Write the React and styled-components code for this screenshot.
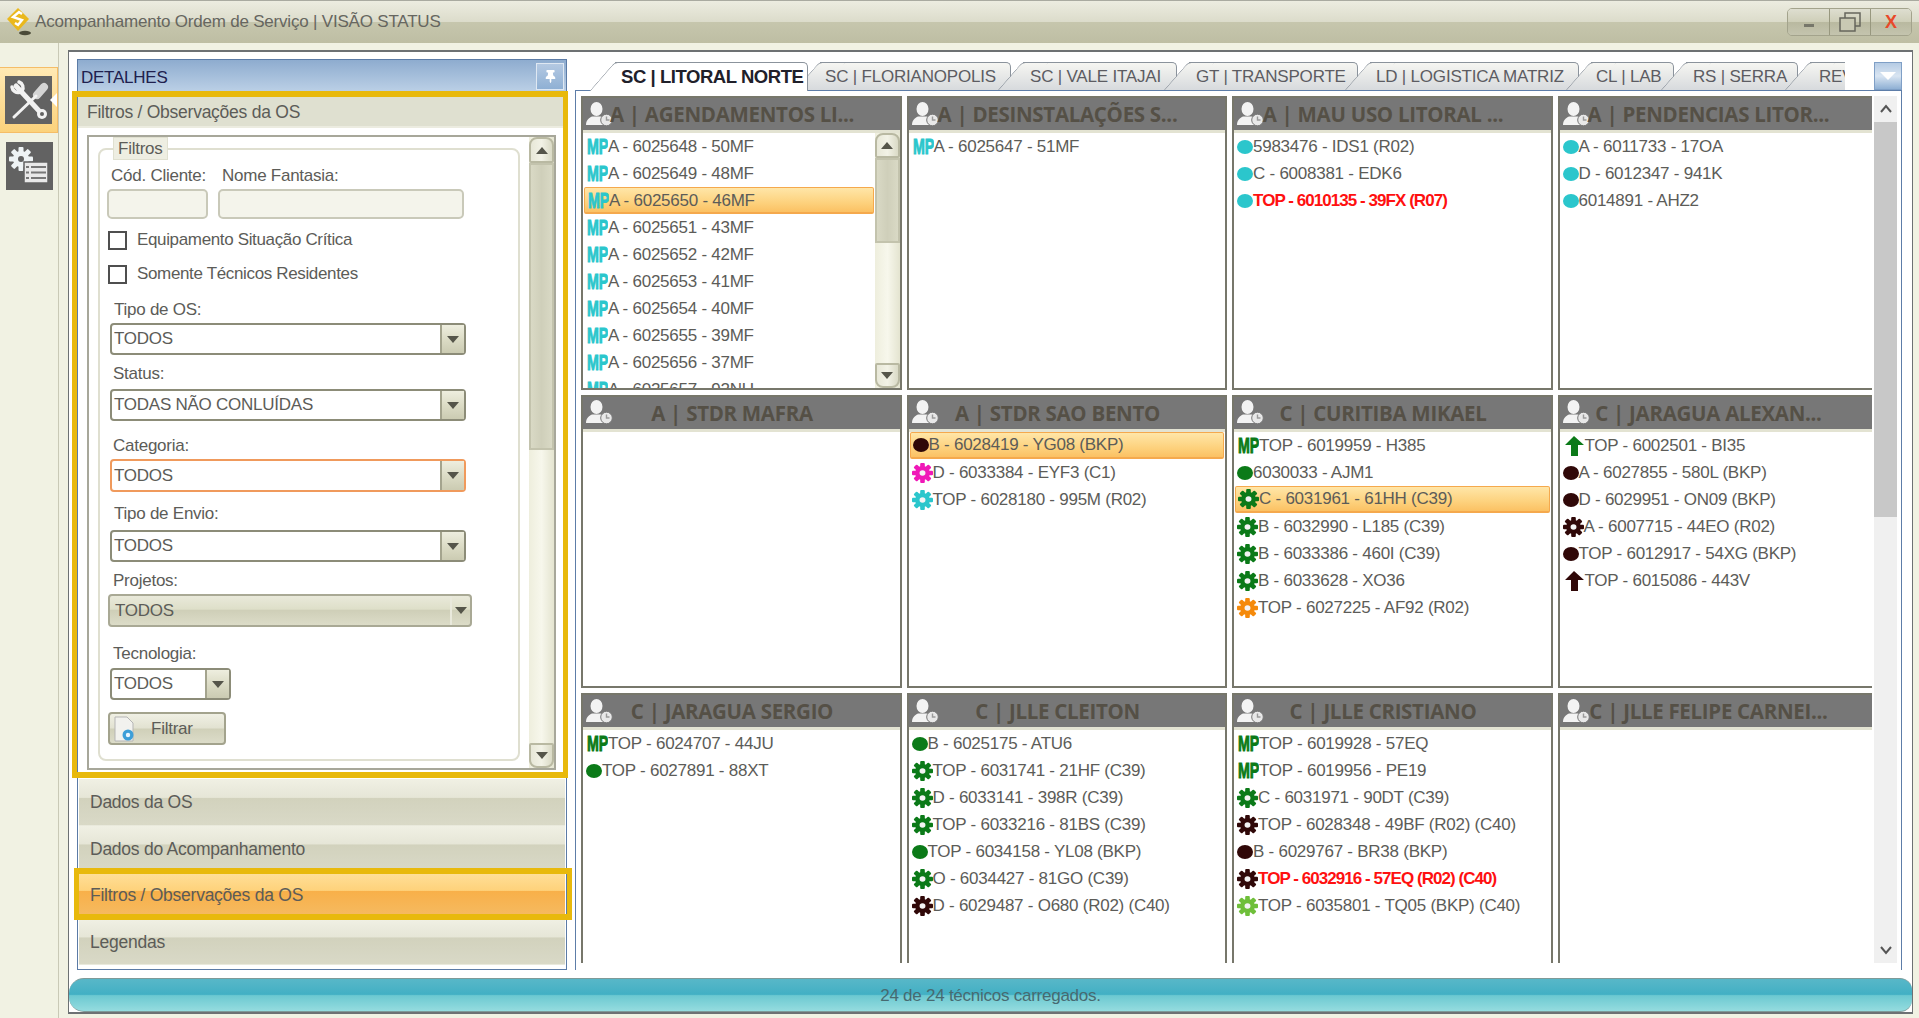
import React from 'react';
import styled, { createGlobalStyle } from 'styled-components';
import { FaThumbtack } from 'react-icons/fa';

const GlobalStyle = createGlobalStyle`
  html, body {
    margin: 0;
    padding: 0;
    background: #f1f2e3;
    overflow: hidden;
  }
  * { box-sizing: border-box; }
  body {
    font-family: "Liberation Sans", Arial, sans-serif;
    font-size: 17px;
    letter-spacing: -0.25px;
    color: #5c5c58;
  }
`;

const Page = styled.div`
  width: 1919px;
  height: 1018px;
  display: flex;
  flex-direction: column;
`;

// window title
const TitleBar = styled.div`
  height: 43px;
  flex: none;
  display: flex;
  align-items: center;
  padding: 0 7px 0 6px;
  border-top: 1px solid #a9aaa0;
  background: linear-gradient(#ecece0, #dcdccb 49%, #c6c6ad 51%, #bebea3);
`;

const TitleText = styled.span`
  margin-left: 1px;
  font-size: 17px;
  letter-spacing: -0.2px;
  color: #666660;
`;

const WindowButtons = styled.div`
  margin-left: auto;
  display: flex;
  height: 28px;
  border: 1px solid #a3a38c;
  border-radius: 5px;
  overflow: hidden;
`;

const WindowButton = styled.div`
  width: 41px;
  display: flex;
  align-items: center;
  justify-content: center;
  color: ${(p) => p.$color || '#6f6f64'};
  font-weight: 700;
  font-size: 18px;
  background: linear-gradient(#deded0, #cfcfb9 48%, #b9b9a0 52%, #c4c4ae);
  & + & { border-left: 1px solid #98987f; }
`;

const Body = styled.div`
  flex: 1;
  display: flex;
  min-height: 0;
`;

const Rail = styled.div`
  width: 59px;
  flex: none;
  padding-top: 24px;
  border-right: 1px solid #c9c9b6;
`;

const RailItem = styled.div`
  position: relative;
  height: 66px;
  display: flex;
  align-items: center;
  justify-content: center;
  ${(p) => p.$active && `
    background: linear-gradient(#ffe9b4, #fbd27c);
    border: 1px solid #f5bd68;
    border-left: 0;
    &::after {
      content: '';
      position: absolute;
      right: 0;
      top: 25px;
      border: 7px solid transparent;
      border-right-color: #fff;
      border-left: 0;
    }
  `}
`;

const RailIcon = styled.div`
  width: 47px;
  height: 48px;
  display: flex;
  align-items: center;
  justify-content: center;
  background: #626262;
`;

const Frame = styled.div`
  width: 1845px;
  height: 964px;
  margin: 7px 0 0 9px;
  background: #fff;
  border: 2px solid #6d7173;
  border-width: 2px 1px 2px 1px;
  display: flex;
  flex-direction: column;
`;

const MainRow = styled.div`
  height: 918px;
  flex: none;
  display: flex;
  padding: 7px 0 0 8px;
`;

// left dock
const DetailPanel = styled.div`
  position: relative;
  width: 490px;
  height: 911px;
  flex: none;
  display: flex;
  flex-direction: column;
  border: 1px solid #5b7ba6;
  background: #fff;
`;

const DetailHeader = styled.div`
  height: 37px;
  flex: none;
  display: flex;
  padding: 3px 2px 0 3px;
  justify-content: space-between;
  background: linear-gradient(#8eaccf, #c3d6ea);
`;

const DetailTitle = styled.span`
  color: #20204e;
  line-height: 30px;
`;

const PinButton = styled.div`
  width: 28px;
  height: 27px;
  display: flex;
  align-items: center;
  justify-content: center;
  color: #fff;
  border: 1px solid #dfe8f2;
  background: linear-gradient(#b4c9e2, #8fb0d4);
`;

const SectionHeader = styled.div`
  height: 31px;
  flex: none;
  padding-left: 9px;
  line-height: 31px;
  font-size: 17.5px;
  background: #dfe0d0;
  border-bottom: 2px solid #ecece0;
`;

const SectionBody = styled.div`
  height: 650px;
  flex: none;
  padding: 7px 10px 8px 9px;
`;

const FormBox = styled.div`
  height: 635px;
  display: flex;
  gap: 9px;
  padding-left: 9px;
  border: 2px solid #a7a79a;
`;

const GroupBox = styled.fieldset`
  width: 422px;
  height: 624px;
  margin: 0;
  padding: 0;
  min-width: 0;
  border: 2px solid #dfdfd0;
  border-radius: 8px;
`;

const GroupLegend = styled.legend`
  margin-left: 13px;
  padding: 0 4px;
  width: 55px;
  height: 23px;
  line-height: 22px;
  background: #eeeee2;
  border: 1px solid #e0e0d0;
`;

const LabelRow = styled.div`
  display: flex;
  height: 18px;
  line-height: 20px;
  margin-top: ${(p) => p.$mt}px;
`;

const FieldLabel = styled.label`
  margin-left: ${(p) => p.$ml}px;
  width: ${(p) => p.$w || 'auto'};
  white-space: nowrap;
`;

const InputRow = styled.div`
  display: flex;
  gap: 10px;
  margin: 5px 0 0 7px;
`;

const TextInput = styled.div`
  width: ${(p) => p.$w}px;
  height: 30px;
  background: #f4f4eb;
  border: 2px solid #c9c9b9;
  border-radius: 5px;
`;

const CheckRow = styled.div`
  display: flex;
  align-items: center;
  height: 20px;
  margin: ${(p) => p.$mt}px 0 0 8px;
  gap: 10px;
  letter-spacing: -0.35px;
`;

const CheckBox = styled.span`
  width: 19px;
  height: 19px;
  border: 2px solid #4f4f4f;
  background: #fff;
`;

const Combo = styled.div`
  display: flex;
  align-items: center;
  justify-content: space-between;
  width: ${(p) => p.$w}px;
  height: ${(p) => p.$h || 32}px;
  margin: ${(p) => p.$mt}px 0 0 ${(p) => p.$ml || 10}px;
  padding-left: 2px;
  border: 2px solid ${(p) => (p.$focus ? '#f09a5c' : '#8c8c78')};
  border-radius: 4px;
  background: ${(p) => (p.$disabled
    ? 'linear-gradient(#e9e9da, #dedfc9 45%, #cfcfb8 50%, #dcdcc8)'
    : '#fff')};
  ${(p) => p.$disabled && 'border-color: #a9a995; padding-left: 5px;'}
`;

const ComboButton = styled.span`
  width: ${(p) => (p.$flat ? 20 : 24)}px;
  align-self: stretch;
  display: flex;
  align-items: center;
  justify-content: center;
  background: ${(p) => (p.$flat ? 'transparent' : 'linear-gradient(#eeeedf, #dcdcc6 50%, #cbcbb2)')};
  border-left: 2px solid ${(p) => (p.$flat ? '#e9e9dc' : '#a4a48e')};
`;

const DownArrow = styled.i`
  border: 6px solid transparent;
  border-top: 7px solid #55554a;
  border-bottom: 0;
`;

const FilterButton = styled.div`
  display: flex;
  align-items: center;
  width: 118px;
  height: 33px;
  margin: 12px 0 0 8px;
  padding-left: 2px;
  border: 2px solid #a3a38d;
  border-radius: 4px;
  background: linear-gradient(#f0f0e4, #e2e2d1 48%, #d0d0b9 52%, #dcdcc9);
`;

const FilterLabel = styled.span`
  margin-left: 15px;
`;

const ScrollBar = styled.div`
  width: 25px;
  height: ${(p) => p.$h}px;
  flex: none;
  display: flex;
  flex-direction: column;
  background: linear-gradient(90deg, #eeeedd, #f7f7ec 50%, #e4e4d0);
`;

const ScrollEnd = styled.div`
  height: ${(p) => p.$h || 25}px;
  flex: none;
  display: flex;
  align-items: center;
  justify-content: center;
  border: 2px solid #b9b9a2;
  border-radius: ${(p) => (p.$down ? '2px 2px 8px 8px' : '8px 8px 2px 2px')};
  background: linear-gradient(90deg, #e8e8d8, #f2f2e6 50%, #dadac6);
  ${(p) => p.$down && 'margin-top: auto;'}
`;

const UpArrow = styled.i`
  border: 6px solid transparent;
  border-bottom: 7px solid #55554a;
  border-top: 0;
`;

const ScrollThumb = styled.div`
  height: ${(p) => p.$h}px;
  flex: none;
  border: 2px solid #c3c3ad;
  background: linear-gradient(90deg, #d9d9c5, #cfcfba 50%, #d9d9c5);
`;

const AccordionItem = styled.div`
  height: 46.5px;
  flex: none;
  display: flex;
  align-items: center;
  padding: 2px 0 0 11px;
  margin: 0 1px;
  font-size: 17.5px;
  border-bottom: 1px solid #e9e9dc;
  background: ${(p) => (p.$active
    ? 'linear-gradient(#ffe09a, #fed27b 40%, #f8b049 42%, #f5bb63)'
    : 'linear-gradient(#f0f0e4, #e6e6d7 40%, #d2d2bd 42%, #d9d9c7)')};
`;

const AccordionList = styled.div`
  margin-top: 1px;
  display: flex;
  flex-direction: column;
`;

// the two yellow marks drawn over the shot
const Highlight = styled.div`
  position: absolute;
  left: ${(p) => p.$left}px;
  top: ${(p) => p.$top}px;
  width: ${(p) => p.$w}px;
  height: ${(p) => p.$h}px;
  border: 6px solid #e8b90c;
  border-left-width: 5px;
  border-right-width: 5px;
  pointer-events: none;
`;

// right side, tabs and cards
const TabPanel = styled.div`
  width: 1327px;
  margin: 3px 0 0 8px;
  flex: none;
  display: flex;
  flex-direction: column;
`;

const TabStrip = styled.div`
  height: 28px;
  flex: none;
  display: flex;
  justify-content: space-between;
`;

const Tabs = styled.div`
  width: 1270px;
  display: flex;
  overflow: hidden;
  padding-left: 40px;
  height: 29px;
  position: relative;
  z-index: 1;
`;

const Tab = styled.div`
  position: relative;
  z-index: ${(p) => (p.$active ? 3 : 0)};
  flex: none;
  width: ${(p) => p.$w}px;
  height: ${(p) => (p.$active ? 29 : 28)}px;
  margin-left: ${(p) => (p.$first ? 0 : 12)}px;
  line-height: 27px;
  padding-left: ${(p) => p.$pad}px;
  white-space: nowrap;
  font-size: ${(p) => (p.$active ? 18.5 : 17)}px;
  font-weight: ${(p) => (p.$active ? 700 : 400)};
  letter-spacing: ${(p) => (p.$active ? '-0.45px' : '-0.2px')};
  color: ${(p) => (p.$active ? '#20202a' : '#5c5c62')};
  border: 1px solid #8b939c;
  border-width: 1px 1px 0 0;
  border-radius: 0 5px 0 0;
  background: ${(p) => (p.$active ? '#fff' : 'linear-gradient(#f6f6f2, #d7dadd)')};
  &::before {
    content: '';
    position: absolute;
    z-index: -1;
    top: -1px;
    bottom: 0;
    left: -13px;
    width: 26px;
    border: 1px solid #8b939c;
    border-width: 1px 0 0 1px;
    border-radius: 4px 0 0 0;
    transform: skewX(-41deg);
    background: ${(p) => (p.$active ? '#fff' : 'linear-gradient(#f6f6f2, #d7dadd)')};
  }
`;

const MenuButton = styled.div`
  width: 28px;
  height: 28px;
  display: flex;
  align-items: center;
  justify-content: center;
  border: 1px solid #7f9fc6;
  background: linear-gradient(#b5cbe4, #d9e5f2 50%, #8fb0d4);
`;

const WhiteArrow = styled.i`
  border: 8px solid transparent;
  border-top: 8px solid #fff;
  border-bottom: 0;
`;

const TabContent = styled.div`
  height: 880px;
  flex: none;
  display: flex;
  gap: 2px;
  padding: 5px 0 0 5px;
  border: 1px solid #5d7da8;
  border-bottom: 0;
`;

const CardArea = styled.div`
  width: 1291px;
  height: 867px;
  overflow: hidden;
`;

const CardGrid = styled.div`
  width: 1310px;
  display: grid;
  grid-template-columns: repeat(4, 320.5px);
  grid-auto-rows: 293.5px;
  column-gap: 5px;
  row-gap: 5px;
`;

const Card = styled.div`
  display: flex;
  flex-direction: column;
  border: 2px solid #77776b;
  background: #fff;
  min-height: 0;
  overflow: hidden;
`;

const CardHeader = styled.div`
  height: 35px;
  flex: none;
  display: flex;
  align-items: center;
  padding-left: 2px;
  background: #777777;
  border-bottom: 3px solid #e3e3d2;
`;

const CardTitle = styled.span`
  flex: none;
  width: 246px;
  margin-left: -4px;
  text-align: center;
  font-family: "Open Sans", "Liberation Sans", sans-serif;
  font-size: 20.5px;
  font-weight: 700;
  letter-spacing: -0.3px;
  color: #555046;
  white-space: nowrap;
`;

const CardBody = styled.div`
  flex: 1;
  display: flex;
  min-height: 0;
`;

const List = styled.div`
  flex: 1;
  min-width: 0;
  overflow: hidden;
`;

const Row = styled.div`
  height: 27px;
  margin: 0 1px;
  padding: 1px 0 0 2px;
  display: flex;
  align-items: center;
  white-space: nowrap;
  color: ${(p) => (p.$alert ? '#ff1010' : 'inherit')};
  font-weight: ${(p) => (p.$alert ? 700 : 400)};
  letter-spacing: ${(p) => (p.$alert ? '-0.95px' : '-0.25px')};
  ${(p) => p.$selected && `
    background: linear-gradient(#ffe6a8, #fdd27e 60%, #fbc163);
    border: 2px solid #f5a94d;
    border-width: 1px 1px 2px 1px;
    border-radius: 2px;
  `}
`;

const RowDot = styled.span`
  flex: none;
  width: 16px;
  height: 14px;
  border-radius: 50%;
  background: ${(p) => p.$color};
`;

const MainScroll = styled.div`
  width: 23px;
  height: 867px;
  flex: none;
  display: flex;
  flex-direction: column;
  align-items: stretch;
  background: #f0f0f0;
`;

const MainScrollEnd = styled.div`
  height: 26px;
  flex: none;
  display: flex;
  align-items: center;
  justify-content: center;
  ${(p) => p.$down && 'margin-top: auto;'}
`;

const MainThumb = styled.div`
  height: 395px;
  flex: none;
  background: #c8c8c8;
`;

const StatusBar = styled.div`
  height: 34px;
  margin: 8px 0 0;
  padding-top: 2px;
  flex: none;
  display: flex;
  align-items: center;
  justify-content: center;
  color: #476a70;
  border-radius: 15px 12px 12px 15px;
  border: 1px solid #7f9a98;
  border-width: 1px 0;
  background: linear-gradient(#58b7c8, #42b0c4 48%, #6cc9d1 52%, #95dcdf);
`;

const Logo = () => (
  <svg width="28" height="30" viewBox="0 0 28 30" style={{ flex: 'none' }}>
    <path d="M12 1l11 11-11 12L1 12z" fill="#eab81d" />
    <path d="M16 7l-3-2-6 5 9 3-4 5-3-2" fill="none" stroke="#fff" strokeWidth="2.400" />
    <ellipse cx="19" cy="26" rx="6" ry="2.200" fill="#4a4a38" />
  </svg>
);

const UserClock = () => (
  <svg width="28" height="25" viewBox="0 0 28 25" style={{ flex: 'none' }}>
    <ellipse cx="11.500" cy="7" rx="6" ry="7" fill="#f3f3f3" />
    <path d="M1 23c0-5 3-7 6-8.500h9c3 1.500 5 3.500 5 8.500z" fill="#f3f3f3" />
    <circle cx="21.500" cy="18" r="5.800" fill="#e8e8e8" stroke="#777" />
    <path d="M21.500 14.500v3.500h3" fill="none" stroke="#9a9a9a" strokeWidth="1.400" />
  </svg>
);

const MpMark = ({ color }) => (
  <svg width="22" height="20" viewBox="0 0 22 20" style={{ flex: 'none' }}>
    <text
      x="1"
      y="17"
      textLength="21"
      lengthAdjust="spacingAndGlyphs"
      fontFamily="Liberation Sans"
      fontWeight="700"
      fontSize="22"
      fill={color}
      stroke={color}
      strokeWidth="1"
    >
      MP
    </text>
  </svg>
);

const ArrowMark = ({ color }) => (
  <svg width="22" height="20" viewBox="0 0 22 20" style={{ flex: 'none' }}>
    <path d="M11 0l10 9h-6v11H8V9H2z" fill={color} />
  </svg>
);

const GearMark = ({ color }) => (
  <svg width="21" height="20" viewBox="0 0 20 20" preserveAspectRatio="none" style={{ flex: 'none' }}>
    <g fill={color}>
      <circle cx="10" cy="10" r="7" />
      {[0, 45, 90, 135].map((deg) => (
        <rect key={deg} x="7.800" y="0" width="4.400" height="20" rx="1" transform={`rotate(${deg} 10 10)`} />
      ))}
    </g>
    <circle cx="10" cy="10" r="2.800" fill="#f4f4f4" />
  </svg>
);

const ToolsMark = () => (
  <svg width="40" height="42" viewBox="0 0 40 42">
    <g fill="none" stroke="#f2f2f2" strokeLinecap="round">
      <path d="M7 7l25 27" strokeWidth="5" />
      <path d="M35 8l-7 8" strokeWidth="8" stroke="#d4d4d4" />
      <path d="M27 17L5 38" strokeWidth="3" />
      <path d="M3 8a6 6 0 0 0 8 5M10 3a6 6 0 0 1 3 9" strokeWidth="3.500" />
    </g>
    <circle cx="33" cy="35" r="5" fill="#f2f2f2" />
    <circle cx="33" cy="35" r="2" fill="#626262" />
  </svg>
);

const SettingsMark = () => (
  <svg width="40" height="38" viewBox="0 0 40 38">
    <g fill="#eef3f5">
      <circle cx="12" cy="12" r="8" />
      {[0, 45, 90, 135].map((deg) => (
        <rect key={deg} x="9.500" y="0" width="5" height="24" rx="1" transform={`rotate(${deg} 12 12)`} />
      ))}
    </g>
    <circle cx="12" cy="12" r="3" fill="#626262" />
    <rect x="15" y="15" width="24" height="21" fill="#e9e9e9" stroke="#626262" strokeWidth="1.500" />
    <path d="M22 20h15M22 25.500h15M22 31h15" stroke="#777" strokeWidth="2" />
    <path d="M17 20h3M17 25.500h3M17 31h3" stroke="#777" strokeWidth="2" />
  </svg>
);

const RowMark = ({ kind, color }) => {
  if (kind === 'mp') return <MpMark color={color} />;
  if (kind === 'gear') return <GearMark color={color} />;
  if (kind === 'arrow') return <ArrowMark color={color} />;
  return <RowDot $color={color} />;
};

const TEAL = '#2bc6cc';
const GREEN = '#0b7a18';
const DARK = '#300808';

const tabs = [
  { label: 'SC | LITORAL NORTE', w: 193, pad: 6, active: true },
  { label: 'SC | FLORIANOPOLIS', w: 191, pad: 5 },
  { label: 'SC | VALE ITAJAI', w: 154, pad: 7 },
  { label: 'GT | TRANSPORTE', w: 169, pad: 7 },
  { label: 'LD | LOGISTICA MATRIZ', w: 209, pad: 6 },
  { label: 'CL | LAB', w: 83, pad: 5 },
  { label: 'RS | SERRA', w: 112, pad: 7 },
  { label: 'REV', w: 60, pad: 9 },
];

const mp = (text, selected) => ({ kind: 'mp', color: TEAL, text, selected });
const dot = (color, text, extra) => ({ kind: 'dot', color, text, ...extra });
const gear = (color, text, extra) => ({ kind: 'gear', color, text, ...extra });
const mpGreen = (text) => ({ kind: 'mp', color: GREEN, text });
const arrow = (color, text) => ({ kind: 'arrow', color, text });

const cards = [
  {
    title: 'A | AGENDAMENTOS LI...',
    scroll: true,
    rows: [
      mp('A - 6025648 - 50MF'),
      mp('A - 6025649 - 48MF'),
      mp('A - 6025650 - 46MF', true),
      mp('A - 6025651 - 43MF'),
      mp('A - 6025652 - 42MF'),
      mp('A - 6025653 - 41MF'),
      mp('A - 6025654 - 40MF'),
      mp('A - 6025655 - 39MF'),
      mp('A - 6025656 - 37MF'),
      mp('A - 6025657 - 92NU'),
    ],
  },
  { title: 'A | DESINSTALAÇÕES S...', rows: [mp('A - 6025647 - 51MF')] },
  {
    title: 'A | MAU USO LITORAL ...',
    rows: [
      dot(TEAL, '5983476 - IDS1 (R02)'),
      dot(TEAL, 'C - 6008381 - EDK6'),
      dot(TEAL, 'TOP - 6010135 - 39FX (R07)', { alert: true }),
    ],
  },
  {
    title: 'A | PENDENCIAS LITOR...',
    rows: [
      dot(TEAL, 'A - 6011733 - 17OA'),
      dot(TEAL, 'D - 6012347 - 941K'),
      dot(TEAL, '6014891 - AHZ2'),
    ],
  },
  { title: 'A | STDR MAFRA', rows: [] },
  {
    title: 'A | STDR SAO BENTO',
    rows: [
      dot(DARK, 'B - 6028419 - YG08 (BKP)', { selected: true }),
      gear('#f018b8', 'D - 6033384 - EYF3 (C1)'),
      gear(TEAL, 'TOP - 6028180 - 995M (R02)'),
    ],
  },
  {
    title: 'C | CURITIBA MIKAEL',
    rows: [
      mpGreen('TOP - 6019959 - H385'),
      dot(GREEN, '6030033 - AJM1'),
      gear(GREEN, 'C - 6031961 - 61HH (C39)', { selected: true }),
      gear(GREEN, 'B - 6032990 - L185 (C39)'),
      gear(GREEN, 'B - 6033386 - 460I (C39)'),
      gear(GREEN, 'B - 6033628 - XO36'),
      gear('#f58a0b', 'TOP - 6027225 - AF92 (R02)'),
    ],
  },
  {
    title: 'C | JARAGUA ALEXAN...',
    rows: [
      arrow(GREEN, 'TOP - 6002501 - BI35'),
      dot(DARK, 'A - 6027855 - 580L (BKP)'),
      dot(DARK, 'D - 6029951 - ON09 (BKP)'),
      gear(DARK, 'A - 6007715 - 44EO (R02)'),
      dot(DARK, 'TOP - 6012917 - 54XG (BKP)'),
      arrow(DARK, 'TOP - 6015086 - 443V'),
    ],
  },
  {
    title: 'C | JARAGUA SERGIO',
    rows: [mpGreen('TOP - 6024707 - 44JU'), dot(GREEN, 'TOP - 6027891 - 88XT')],
  },
  {
    title: 'C | JLLE CLEITON',
    rows: [
      dot(GREEN, 'B - 6025175 - ATU6'),
      gear(GREEN, 'TOP - 6031741 - 21HF (C39)'),
      gear(GREEN, 'D - 6033141 - 398R (C39)'),
      gear(GREEN, 'TOP - 6033216 - 81BS (C39)'),
      dot(GREEN, 'TOP - 6034158 - YL08 (BKP)'),
      gear(GREEN, 'O - 6034427 - 81GO (C39)'),
      gear(DARK, 'D - 6029487 - O680 (R02) (C40)'),
    ],
  },
  {
    title: 'C | JLLE CRISTIANO',
    rows: [
      mpGreen('TOP - 6019928 - 57EQ'),
      mpGreen('TOP - 6019956 - PE19'),
      gear(GREEN, 'C - 6031971 - 90DT (C39)'),
      gear(DARK, 'TOP - 6028348 - 49BF (R02) (C40)'),
      dot(DARK, 'B - 6029767 - BR38 (BKP)'),
      gear(DARK, 'TOP - 6032916 - 57EQ (R02) (C40)', { alert: true }),
      gear('#6fbf3a', 'TOP - 6035801 - TQ05 (BKP) (C40)'),
    ],
  },
  { title: 'C | JLLE FELIPE CARNEI...', rows: [] },
];

function TechCard({ card }) {
  return (
    <Card>
      <CardHeader>
        <UserClock />
        <CardTitle>{card.title}</CardTitle>
      </CardHeader>
      <CardBody>
        <List>
          {card.rows.map((row) => (
            <Row key={row.text} $selected={row.selected} $alert={row.alert}>
              <RowMark kind={row.kind} color={row.color} />
              {row.text}
            </Row>
          ))}
        </List>
        {card.scroll && (
          <ScrollBar $h={255}>
            <ScrollEnd><UpArrow /></ScrollEnd>
            <ScrollThumb $h={85} />
            <ScrollEnd $down><DownArrow /></ScrollEnd>
          </ScrollBar>
        )}
      </CardBody>
    </Card>
  );
}

function FilterForm() {
  return (
    <GroupBox>
      <GroupLegend>Filtros</GroupLegend>
      <LabelRow $mt={6}>
        <FieldLabel $ml={11} $w="111px">Cód. Cliente:</FieldLabel>
        <FieldLabel $ml={0}>Nome Fantasia:</FieldLabel>
      </LabelRow>
      <InputRow>
        <TextInput $w={101} />
        <TextInput $w={246} />
      </InputRow>
      <CheckRow $mt={11}>
        <CheckBox />
        Equipamento Situação Crítica
      </CheckRow>
      <CheckRow $mt={14}>
        <CheckBox />
        Somente Técnicos Residentes
      </CheckRow>
      <LabelRow $mt={16}><FieldLabel $ml={14}>Tipo de OS:</FieldLabel></LabelRow>
      <Combo $w={356} $mt={5}>TODOS<ComboButton><DownArrow /></ComboButton></Combo>
      <LabelRow $mt={9}><FieldLabel $ml={13}>Status:</FieldLabel></LabelRow>
      <Combo $w={356} $mt={7}>TODAS NÃO CONLUÍDAS<ComboButton><DownArrow /></ComboButton></Combo>
      <LabelRow $mt={15}><FieldLabel $ml={13}>Categoria:</FieldLabel></LabelRow>
      <Combo $w={356} $h={33} $mt={5} $focus>TODOS<ComboButton><DownArrow /></ComboButton></Combo>
      <LabelRow $mt={12}><FieldLabel $ml={14}>Tipo de Envio:</FieldLabel></LabelRow>
      <Combo $w={356} $mt={8}>TODOS<ComboButton><DownArrow /></ComboButton></Combo>
      <LabelRow $mt={9}><FieldLabel $ml={13}>Projetos:</FieldLabel></LabelRow>
      <Combo $w={364} $h={33} $mt={5} $ml={8} $disabled>
        TODOS
        <ComboButton $flat><DownArrow /></ComboButton>
      </Combo>
      <LabelRow $mt={17}><FieldLabel $ml={13}>Tecnologia:</FieldLabel></LabelRow>
      <Combo $w={121} $mt={6}>TODOS<ComboButton><DownArrow /></ComboButton></Combo>
      <FilterButton>
        <svg width="24" height="28" viewBox="0 0 24 28">
          <path d="M3 2h12l6 6v18H3z" fill="#f2f2ee" stroke="#b5b5b5" />
          <circle cx="16" cy="20" r="5.500" fill="#3d9fd8" />
          <circle cx="16" cy="20" r="2.200" fill="#eaf6ff" />
        </svg>
        <FilterLabel>Filtrar</FilterLabel>
      </FilterButton>
    </GroupBox>
  );
}

export default function App() {
  return (
    <Page>
      <GlobalStyle />
      <TitleBar>
        <Logo />
        <TitleText>Acompanhamento Ordem de Serviço | VISÃO STATUS</TitleText>
        <WindowButtons>
          <WindowButton>
            <svg width="10" height="12" viewBox="0 0 10 12"><rect width="10" height="3" y="8" fill="#77776a" /></svg>
          </WindowButton>
          <WindowButton>
            <svg width="22" height="20" viewBox="0 0 22 20" fill="none" stroke="#66665c" strokeWidth="1.500">
              <rect x="6" y="1" width="15" height="13" />
              <rect x="1" y="6" width="15" height="13" fill="#c9c9b3" />
            </svg>
          </WindowButton>
          <WindowButton $color="#e8492a">X</WindowButton>
        </WindowButtons>
      </TitleBar>
      <Body>
        <Rail>
          <RailItem $active>
            <RailIcon><ToolsMark /></RailIcon>
          </RailItem>
          <RailItem>
            <RailIcon><SettingsMark /></RailIcon>
          </RailItem>
        </Rail>
        <Frame>
          <MainRow>
            <DetailPanel>
              <DetailHeader>
                <DetailTitle>DETALHES</DetailTitle>
                <PinButton><FaThumbtack size={13} /></PinButton>
              </DetailHeader>
              <SectionHeader>Filtros / Observações da OS</SectionHeader>
              <SectionBody>
                <FormBox>
                  <FilterForm />
                  <ScrollBar $h={631}>
                    <ScrollEnd $h={26}><UpArrow /></ScrollEnd>
                    <ScrollThumb $h={287} />
                    <ScrollEnd $down $h={25}><DownArrow /></ScrollEnd>
                  </ScrollBar>
                </FormBox>
              </SectionBody>
              <AccordionList>
                <AccordionItem>Dados da OS</AccordionItem>
                <AccordionItem>Dados do Acompanhamento</AccordionItem>
                <AccordionItem $active>Filtros / Observações da OS</AccordionItem>
                <AccordionItem>Legendas</AccordionItem>
              </AccordionList>
              <Highlight $left={-6} $top={31} $w={496} $h={687} />
              <Highlight $left={-4} $top={808} $w={498} $h={52} />
            </DetailPanel>
            <TabPanel>
              <TabStrip>
                <Tabs>
                  {tabs.map((tab, idx) => (
                    <Tab
                      key={tab.label}
                      $active={tab.active}
                      $first={idx === 0}
                      $w={tab.w}
                      $pad={tab.pad}
                    >
                      {tab.label}
                    </Tab>
                  ))}
                </Tabs>
                <MenuButton><WhiteArrow /></MenuButton>
              </TabStrip>
              <TabContent>
                <CardArea>
                  <CardGrid>
                    {cards.map((card) => <TechCard key={card.title} card={card} />)}
                  </CardGrid>
                </CardArea>
                <MainScroll>
                  <MainScrollEnd>
                    <svg width="14" height="10" viewBox="0 0 14 10" fill="none" stroke="#555" strokeWidth="2"><path d="M2 8l5-6 5 6" /></svg>
                  </MainScrollEnd>
                  <MainThumb />
                  <MainScrollEnd $down>
                    <svg width="14" height="10" viewBox="0 0 14 10" fill="none" stroke="#555" strokeWidth="2"><path d="M2 2l5 6 5-6" /></svg>
                  </MainScrollEnd>
                </MainScroll>
              </TabContent>
            </TabPanel>
          </MainRow>
          <StatusBar>24 de 24 técnicos carregados.</StatusBar>
        </Frame>
      </Body>
    </Page>
  );
}
